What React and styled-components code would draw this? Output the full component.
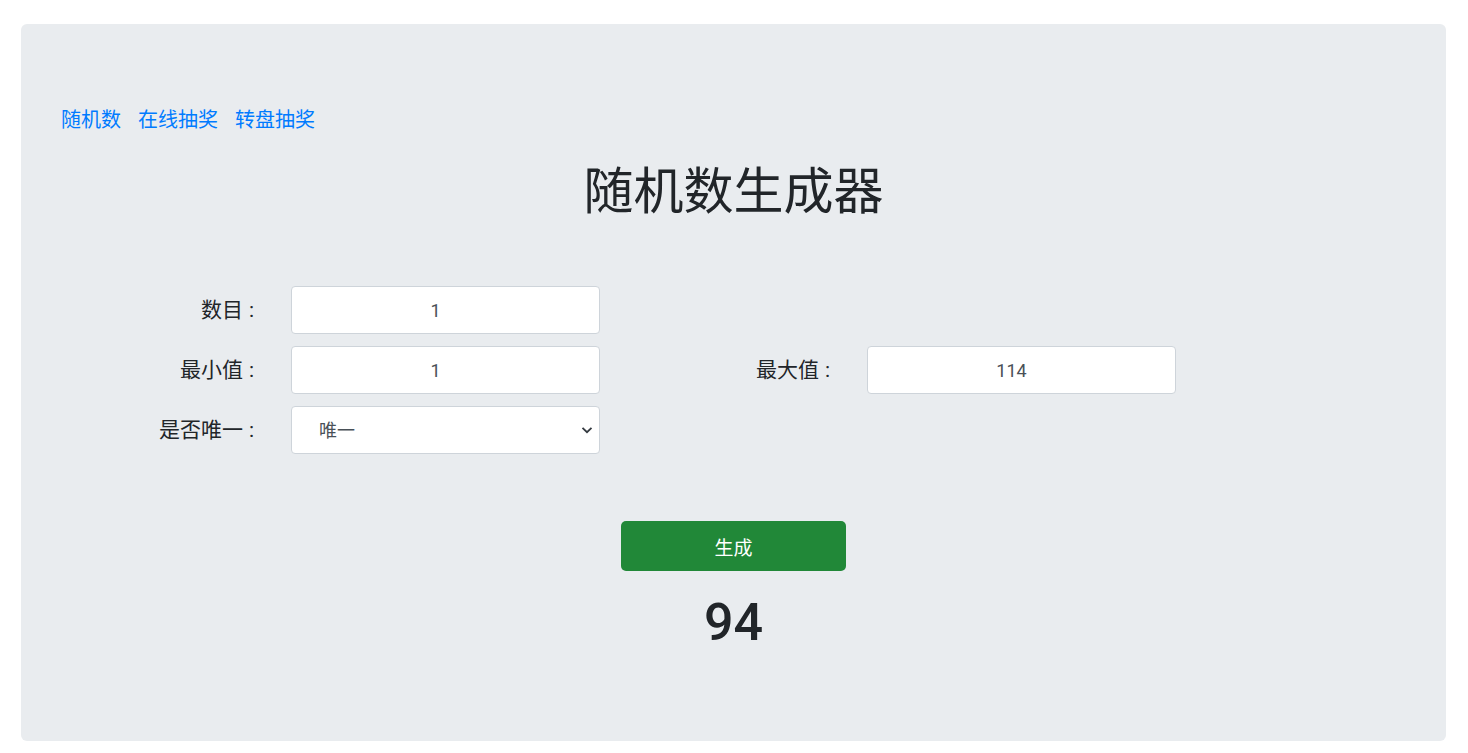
import React, { useState } from "react";
import styled, { createGlobalStyle } from "styled-components";

const GlobalStyle = createGlobalStyle`
  html, body {
    margin: 0;
    padding: 0;
    background: #ffffff;
  }
  body {
    font-family: Roboto, "Noto Sans CJK SC", "Noto Sans", sans-serif;
    color: #212529;
  }
  * {
    box-sizing: border-box;
  }
`;

const Jumbotron = styled.div`
  margin: 24px 22px 12px 21px;
  padding: 81px 40px 88px;
  background: #e9ecef;
  border-radius: 6px;
`;

const Nav = styled.nav`
  display: flex;
  gap: 17px;
  font-size: 20px;
  line-height: 30px;
`;

const NavLink = styled.a`
  color: #007bff;
  text-decoration: none;
  cursor: pointer;
  &:hover {
    text-decoration: underline;
  }
`;

const Title = styled.h1`
  margin: 27px 0 0;
  text-align: center;
  font-size: 50px;
  line-height: 60px;
  font-weight: 400;
  color: #212529;
`;

const FormGrid = styled.div`
  margin: 64px 0 0 46px;
  display: grid;
  grid-template-columns: 184px 309px 267px 309px;
  grid-auto-rows: 48px;
  row-gap: 12px;
  align-items: center;
`;

const Label = styled.label`
  grid-column: ${(p) => p.$col || 1};
  text-align: right;
  padding-right: 37px;
  font-size: 21px;
  line-height: 30px;
  color: #212529;
  white-space: nowrap;
`;

const Colon = styled.span`
  margin-left: 6px;
`;

const Field = styled.input`
  grid-column: ${(p) => p.$col || 2};
  width: 100%;
  height: 48px;
  padding: 6px 32px 6px 12px;
  border: 1px solid #ced4da;
  border-radius: 4px;
  background: #ffffff;
  font-family: Roboto, "Noto Sans CJK SC", sans-serif;
  font-size: 18px;
  color: #495057;
  text-align: center;
  outline: none;
  &:focus {
    border-color: #80bdff;
  }
`;

const SelectWrap = styled.div`
  grid-column: 2;
  position: relative;
  height: 48px;
`;

const Select = styled.select`
  appearance: none;
  width: 100%;
  height: 48px;
  padding: 6px 30px 6px 27px;
  border: 1px solid #ced4da;
  border-radius: 4px;
  background: #ffffff;
  font-family: Roboto, "Noto Sans CJK SC", sans-serif;
  font-size: 18px;
  color: #495057;
  outline: none;
`;

const Chevron = styled.svg`
  position: absolute;
  right: 7px;
  top: 19px;
  pointer-events: none;
`;

const Actions = styled.div`
  display: flex;
  flex-direction: column;
  align-items: center;
  margin-top: 67px;
`;

const Button = styled.button`
  width: 225px;
  height: 50px;
  border: none;
  border-radius: 5px;
  background: #218838;
  color: #ffffff;
  font-family: Roboto, "Noto Sans CJK SC", sans-serif;
  font-size: 19px;
  cursor: pointer;
  &:hover {
    background: #1e7e34;
  }
`;

const Result = styled.div`
  margin-top: 22px;
  font-size: 52px;
  line-height: 60px;
  font-weight: 500;
  color: #212529;
`;

function FieldLabel({ col, children }) {
  return (
    <Label $col={col}>
      {children}
      <Colon>:</Colon>
    </Label>
  );
}

export default function App() {
  const [count, setCount] = useState("1");
  const [min, setMin] = useState("1");
  const [max, setMax] = useState("114");
  const [unique, setUnique] = useState("1");
  const [result, setResult] = useState("94");

  const generate = () => {
    const lo = parseInt(min, 10) || 0;
    const hi = parseInt(max, 10) || 0;
    const n = Math.max(1, parseInt(count, 10) || 1);
    const out = [];
    let guard = 0;
    while (out.length < n && guard < 10000) {
      guard++;
      const v = lo + Math.floor(Math.random() * (hi - lo + 1));
      if (unique === "1" && out.includes(v)) continue;
      out.push(v);
    }
    setResult(out.join(" "));
  };

  return (
    <>
      <GlobalStyle />
      <Jumbotron>
        <Nav>
          <NavLink>随机数</NavLink>
          <NavLink>在线抽奖</NavLink>
          <NavLink>转盘抽奖</NavLink>
        </Nav>
        <Title>随机数生成器</Title>
        <FormGrid>
          <FieldLabel>数目</FieldLabel>
          <Field value={count} onChange={(e) => setCount(e.target.value)} />

          <FieldLabel>最小值</FieldLabel>
          <Field value={min} onChange={(e) => setMin(e.target.value)} />
          <FieldLabel col={3}>最大值</FieldLabel>
          <Field $col={4} value={max} onChange={(e) => setMax(e.target.value)} />

          <FieldLabel>是否唯一</FieldLabel>
          <SelectWrap>
            <Select value={unique} onChange={(e) => setUnique(e.target.value)}>
              <option value="1">唯一</option>
              <option value="0">不唯一</option>
            </Select>
            <Chevron width="12" height="10" viewBox="0 0 12 10">
              <path d="M1.5 2.8 L6 7.2 L10.5 2.8" fill="none" stroke="#343a40" strokeWidth="1.8" />
            </Chevron>
          </SelectWrap>
        </FormGrid>
        <Actions>
          <Button onClick={generate}>生成</Button>
          <Result>{result}</Result>
        </Actions>
      </Jumbotron>
    </>
  );
}
